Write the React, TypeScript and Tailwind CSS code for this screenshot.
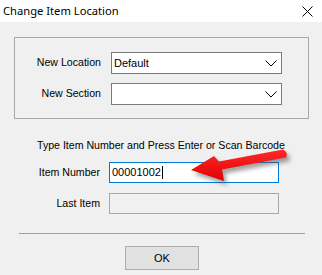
import React from "react";

function Combo({ value }: { value?: string }) {
  return (
    <div className="w-[171px] h-[22px] bg-white border border-[#7a7a7a] flex items-center justify-between pl-[2px] pr-[3px]">
      <span className="text-[11px] leading-none text-black">{value ?? ""}</span>
      <svg width="12" height="7" viewBox="0 0 12 7" className="mr-[1px]">
        <path d="M0.5 0.5 L6 6 L11.5 0.5" fill="none" stroke="#000" strokeWidth="1" />
      </svg>
    </div>
  );
}

export default function App() {
  const font = { fontFamily: '"Liberation Sans", Arial, sans-serif' };
  return (
    <div className="relative w-[322px] h-[275px] overflow-hidden bg-[#f0f0f0]" style={font}>
      <div className="h-[22px] bg-white flex items-center justify-between pl-[3px] pr-[9px]">
        <span className="text-[11.2px] text-black" style={{ fontFamily: '"Noto Sans", "Open Sans", sans-serif' }}>
          Change Item Location
        </span>
        <svg width="11" height="11" viewBox="0 0 11 11">
          <path d="M0.5 0.5 L10.5 10.5 M10.5 0.5 L0.5 10.5" stroke="#000" strokeWidth="1" />
        </svg>
      </div>
      <div className="flex flex-col">
        <div className="mt-[15px] ml-[14px] w-[295px] h-[82px] border border-[#a8a8a8] flex flex-col pt-[14px] gap-[9px]">
          <div className="flex items-center gap-[10px]">
            <span className="w-[86px] text-right text-[10.6px] text-black">New Location</span>
            <Combo value="Default" />
          </div>
          <div className="flex items-center gap-[10px]">
            <span className="w-[86px] text-right text-[10.6px] text-black">New Section</span>
            <Combo />
          </div>
        </div>
        <div className="mt-[20px] ml-[37px] h-[13px] flex items-center text-[10.6px] text-black whitespace-nowrap">
          Type Item Number and Press Enter or Scan Barcode
        </div>
        <div className="mt-[10px] flex items-center gap-[9px]">
          <span className="w-[100px] text-right text-[10.6px] text-black">Item Number</span>
          <div className="w-[170px] h-[21px] bg-white border border-[#0078d7] flex items-center pl-[2px]">
            <span className="text-[11px] text-black leading-none">00001002</span>
            <span className="w-px h-[13px] bg-black ml-px" />
          </div>
        </div>
        <div className="mt-[10px] flex items-center gap-[9px]">
          <span className="w-[100px] text-right text-[10.6px] text-black">Last Item</span>
          <div className="w-[170px] h-[21px] bg-[#f0f0f0] border border-[#a8a8a8]" />
        </div>
        <div className="mt-[19px] ml-[19px] w-[286px] h-px bg-[#a0a0a0]" />
        <div className="mt-[12px] ml-[125px] w-[74px] h-[24px] bg-[#e1e1e1] border border-[#adadad] flex items-center justify-center text-[11px] text-black">
          OK
        </div>
      </div>
      <svg className="absolute left-0 top-0 pointer-events-none" width="322" height="275" viewBox="0 0 322 275">
        <defs>
          <filter id="sh" x="-20%" y="-50%" width="140%" height="200%">
            <feGaussianBlur stdDeviation="2" />
          </filter>
          <linearGradient id="rg" x1="0" y1="0" x2="0" y2="1">
            <stop offset="0" stopColor="#ff2a2a" />
            <stop offset="1" stopColor="#e00000" />
          </linearGradient>
        </defs>
        <g transform="translate(3,4)" filter="url(#sh)" opacity="0.55">
          <path d="M191 170 L214 156 L219 161.5 L283 149.5 Q289 153 286 157.5 L222 169.5 L224 181 Z" fill="#555" />
        </g>
        <path d="M191 170 L214 156 L219 161.5 L283 149.5 Q289 153 286 157.5 L222 169.5 L224 181 Z" fill="url(#rg)" />
      </svg>
    </div>
  );
}
